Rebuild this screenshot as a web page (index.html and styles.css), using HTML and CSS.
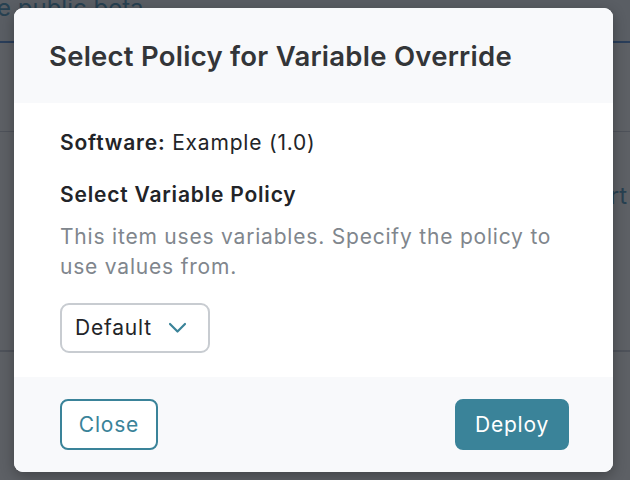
FILE: index.html
```html
<!DOCTYPE html>
<html>
<head>
<meta charset="utf-8">
<link rel="stylesheet" href="styles.css">
</head>
<body>
<div class="page">
  <div class="banner"><span class="banner-text">the public beta</span></div>
  <div class="section section-a"></div>
  <div class="section section-b"><span class="side-text">Start</span></div>
  <div class="section section-c"></div>
</div>
<div class="overlay"></div>
<div class="modal">
  <div class="modal-header">
    <h1 class="modal-title">Select Policy for Variable Override</h1>
  </div>
  <div class="modal-body">
    <p class="software"><strong>Software:</strong> Example (1.0)</p>
    <h2 class="field-label">Select Variable Policy</h2>
    <p class="field-help">This item uses variables. Specify the policy to use values from.</p>
    <div class="select">
      <span class="select-value">Default</span>
      <svg class="chevron" width="19" height="12" viewBox="0 0 19 12"><path d="M2 2 L9.5 9.5 L17 2" fill="none" stroke="#3a8399" stroke-width="2.2" stroke-linecap="round" stroke-linejoin="round"/></svg>
    </div>
  </div>
  <div class="modal-footer">
    <button class="btn btn-outline">Close</button>
    <button class="btn btn-primary">Deploy</button>
  </div>
</div>
</body>
</html>
```
FILE: styles.css
```css
* { box-sizing: border-box; }
html, body { margin: 0; padding: 0; }
body {
  width: 630px;
  height: 480px;
  overflow: hidden;
  font-family: Inter, "Open Sans", "Liberation Sans", sans-serif;
  background: #ffffff;
  position: relative;
}
.page { width: 630px; height: 480px; background: #fff; }
.banner {
  height: 43px;
  background: #f2f6fc;
  border-bottom: 2px solid #4a86d8;
  overflow: hidden;
  white-space: nowrap;
}
.banner-text {
  display: inline-block;
  margin-left: -25px;
  margin-top: -9px;
  font-size: 24px;
  color: #3f90b8;
  line-height: 28px;
}
.section { border-bottom: 1px solid #c9ced6; }
.section-a { height: 89px; }
.section-b { height: 219px; position: relative; overflow: hidden; }
.side-text {
  position: absolute;
  right: 3px;
  top: 49px;
  font-size: 24px;
  color: #3f90b8;
}
.overlay {
  position: absolute;
  inset: 0;
  background: rgba(30, 34, 42, 0.72);
}
.modal {
  position: absolute;
  left: 14px;
  top: 8px;
  width: 599px;
  height: 464px;
  border-radius: 9px;
  background: #fff;
  overflow: hidden;
  display: flex;
  flex-direction: column;
  box-shadow: 0 4px 14px rgba(0,0,0,0.3);
}
.modal-header {
  height: 95px;
  background: #f8f9fb;
  display: flex;
  align-items: center;
  padding: 0 35px;
}
.modal-title {
  margin: 0;
  font-size: 27.5px;
  font-weight: 600;
  color: #333538;
  letter-spacing: 0.25px;
}
.modal-body {
  flex: 1;
  padding: 25px 46px 0;
  color: #222428;
  font-size: 21px;
  line-height: 30px;
  letter-spacing: 0.8px;
}
.software { margin: 0 0 22px; }
.software strong { font-weight: 600; }
.field-label {
  margin: 0 0 12px;
  font-size: 21px;
  line-height: 30px;
  font-weight: 600;
}
.field-help { margin: 0 0 21px; color: #80868d; }
.select {
  width: 150px;
  height: 50px;
  border: 2px solid #c8ccd1;
  border-radius: 9px;
  display: flex;
  align-items: center;
  padding: 0 0 0 13px;
  gap: 16px;
}
.select-value { color: #222428; }
.chevron { display: block; }
.modal-footer {
  height: 95px;
  background: #f8f9fb;
  display: flex;
  align-items: center;
  justify-content: space-between;
  padding: 0 44px 0 46px;
}
.btn {
  height: 51px;
  border-radius: 8px;
  font-family: inherit;
  font-size: 21px;
  letter-spacing: 0.8px;
  padding: 0;
  cursor: pointer;
}
.btn-outline {
  width: 98px;
  background: #fff;
  border: 2px solid #3a8399;
  color: #3a8399;
}
.btn-primary {
  width: 114px;
  background: #3a8399;
  border: 2px solid #3a8399;
  color: #fff;
}
```
